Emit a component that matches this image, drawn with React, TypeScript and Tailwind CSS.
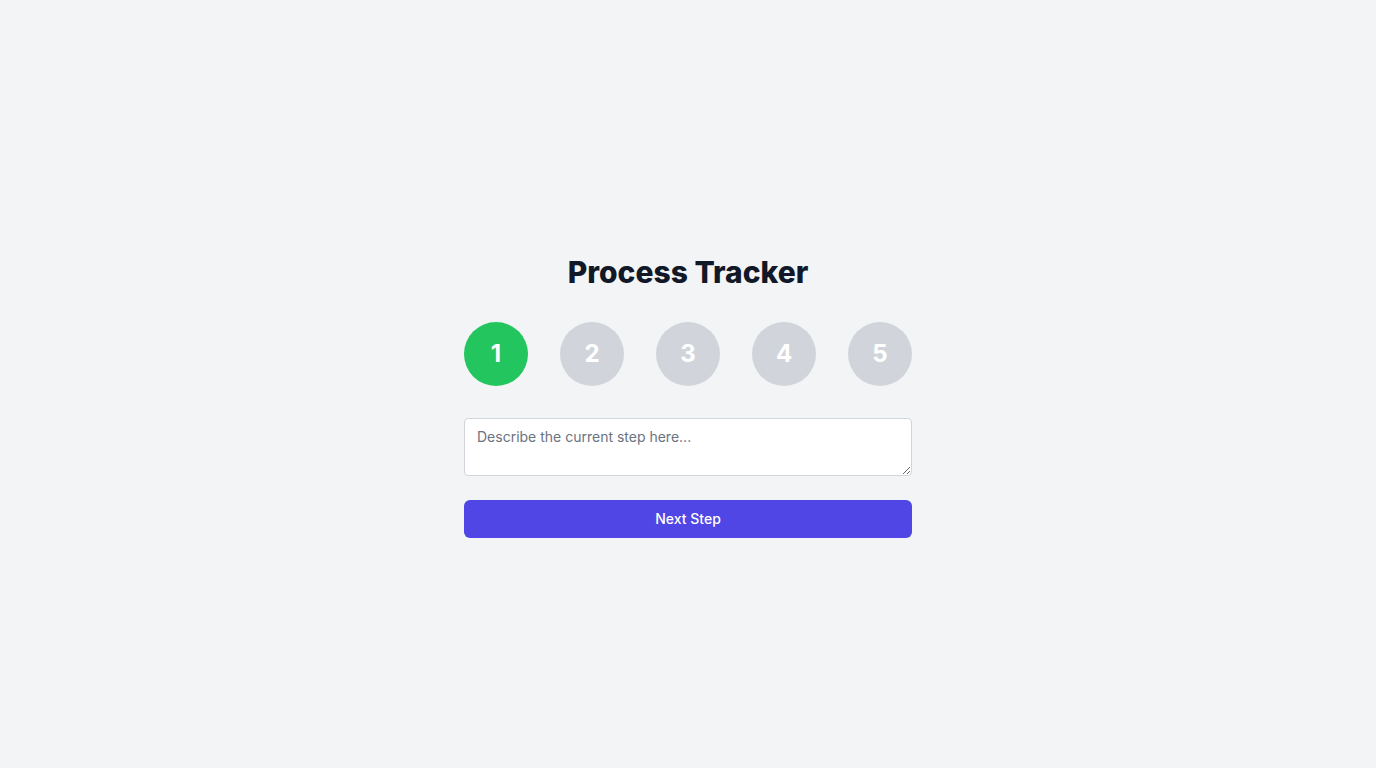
import { useState } from 'react'

const steps = [1, 2, 3, 4, 5]

export default function App() {
  const [current, setCurrent] = useState(1)
  const [note, setNote] = useState('')

  return (
    <div className="min-h-screen bg-[#f3f4f6] flex items-center justify-center font-['Inter',sans-serif]">
      <div className="w-[448px] pt-6 flex flex-col items-center">
        <h1 className="text-3xl font-extrabold text-[#111827] mb-8">Process Tracker</h1>

        {/* Steps */}
        <div className="w-full flex justify-between mb-8">
          {steps.map((s) => (
            <div
              key={s}
              className={`w-16 h-16 rounded-full flex items-center justify-center text-2xl font-bold text-white ${
                s <= current ? 'bg-[#22c55e]' : 'bg-[#d1d5db]'
              }`}
            >
              {s}
            </div>
          ))}
        </div>

        <textarea
          rows={2}
          value={note}
          onChange={(e) => setNote(e.target.value)}
          placeholder="Describe the current step here..."
          className="w-full block px-3 py-2 text-sm bg-white border border-[#d1d5db] rounded text-[#111827] placeholder-[#6b7280] focus:outline-none mb-6"
        />

        <button
          onClick={() => setCurrent((c) => (c < steps.length ? c + 1 : c))}
          className="w-full py-[9px] text-sm bg-[#4f46e5] text-white font-medium rounded-md hover:bg-[#4338ca]"
        >
          Next Step
        </button>
      </div>
    </div>
  )
}
